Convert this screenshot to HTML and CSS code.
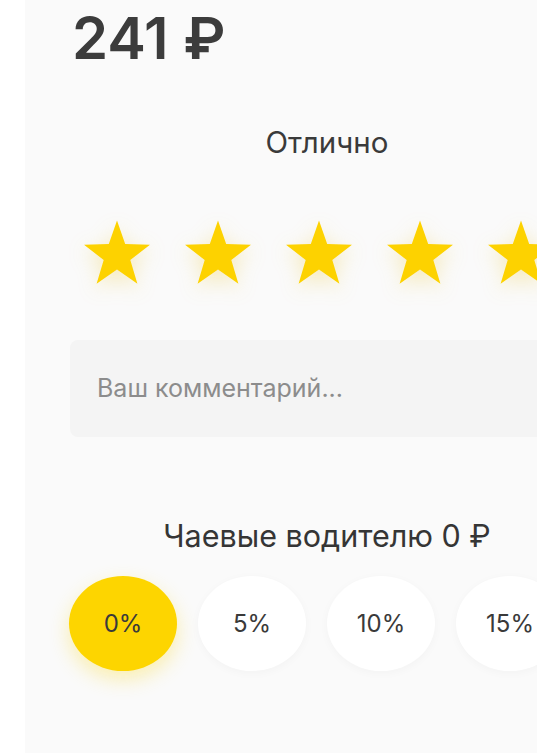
FILE: index.html
```html
<!DOCTYPE html>
<html lang="ru">
<head>
<meta charset="utf-8">
<link rel="stylesheet" href="styles.css">
</head>
<body>
<div class="screen">
  <div class="price">241 ₽</div>
  <div class="rating-label">Отлично</div>
  <div class="stars">
    <svg class="star" viewBox="0 0 66 64"><polygon points="33,0 41.2,23.5 66,24.3 46.3,39.4 53.4,63.2 33,49.1 12.6,63.2 19.7,39.4 0,24.3 24.8,23.5"/></svg>
    <svg class="star" viewBox="0 0 66 64"><polygon points="33,0 41.2,23.5 66,24.3 46.3,39.4 53.4,63.2 33,49.1 12.6,63.2 19.7,39.4 0,24.3 24.8,23.5"/></svg>
    <svg class="star" viewBox="0 0 66 64"><polygon points="33,0 41.2,23.5 66,24.3 46.3,39.4 53.4,63.2 33,49.1 12.6,63.2 19.7,39.4 0,24.3 24.8,23.5"/></svg>
    <svg class="star" viewBox="0 0 66 64"><polygon points="33,0 41.2,23.5 66,24.3 46.3,39.4 53.4,63.2 33,49.1 12.6,63.2 19.7,39.4 0,24.3 24.8,23.5"/></svg>
    <svg class="star" viewBox="0 0 66 64"><polygon points="33,0 41.2,23.5 66,24.3 46.3,39.4 53.4,63.2 33,49.1 12.6,63.2 19.7,39.4 0,24.3 24.8,23.5"/></svg>
  </div>
  <div class="comment">Ваш комментарий...</div>
  <div class="tips-label">Чаевые водителю 0 ₽</div>
  <div class="tips">
    <div class="tip active">0%</div>
    <div class="tip">5%</div>
    <div class="tip">10%</div>
    <div class="tip">15%</div>
  </div>
</div>
</body>
</html>
```

FILE: styles.css
```css
html, body {
  margin: 0;
  padding: 0;
  background: #ffffff;
  overflow: hidden;
  height: 753px;
}

.screen {
  margin-left: 25px;
  width: 604px;
  height: 753px;
  background: #fafafa;
  font-family: Inter, Roboto, "Noto Sans", sans-serif;
  color: #333333;
  display: flex;
  flex-direction: column;
}

.price {
  font-size: 58px;
  font-weight: 600;
  line-height: 58px;
  color: #3c3c3c;
  margin-top: 9px;
  padding-left: 47px;
}

.rating-label {
  text-align: center;
  font-size: 29.5px;
  line-height: 30px;
  margin-top: 60px;
  color: #3a3a3a;
}

.stars {
  display: flex;
  gap: 35px;
  padding-left: 59px;
  margin-top: 62px;
}

.star {
  width: 66px;
  height: 67px;
  fill: #fdd200;
  filter: drop-shadow(0 6px 10px rgba(240, 200, 40, 0.3));
}

.comment {
  margin: 54px 0 0 45px;
  height: 97px;
  width: 600px;
  box-sizing: border-box;
  background: #f4f4f4;
  border-radius: 8px;
  padding-left: 27px;
  padding-bottom: 2px;
  display: flex;
  align-items: center;
  font-size: 25px;
  color: #8c8c8c;
}

.tips-label {
  text-align: center;
  font-size: 30.5px;
  line-height: 30px;
  margin-top: 84px;
  color: #353535;
}

.tips {
  display: flex;
  gap: 21px;
  padding-left: 44px;
  margin-top: 25px;
}

.tip {
  flex: none;
  width: 108px;
  height: 95px;
  border-radius: 50%;
  background: #ffffff;
  display: flex;
  align-items: center;
  justify-content: center;
  font-size: 24px;
  color: #3a3a3a;
  box-shadow: 0 2px 10px rgba(0, 0, 0, 0.03);
}

.tip.active {
  background: #fdd500;
  box-shadow: 0 8px 20px rgba(253, 213, 0, 0.3);
}
```
